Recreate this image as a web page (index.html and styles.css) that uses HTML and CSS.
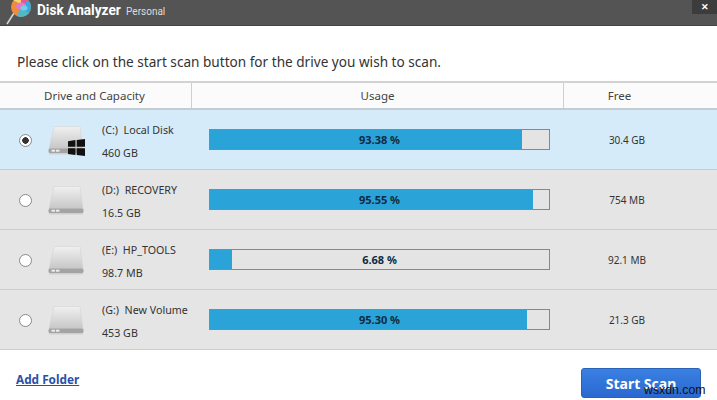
FILE: index.html
```html
<!DOCTYPE html>
<html lang="en">
<head>
    <meta charset="UTF-8">
    <title>Disk Analyzer Personal</title>
    <link rel="stylesheet" href="styles.css">
</head>
<body>
    <svg width="0" height="0" class="defs">
        <defs>
            <linearGradient id="driveTop" x1="0" y1="0" x2="0" y2="1">
                <stop offset="0" stop-color="#f0f0f0"/>
                <stop offset="1" stop-color="#c6c6c6"/>
            </linearGradient>
            <symbol id="drive" viewBox="0 0 36 29">
                <path d="M6 0.500H32L35 23H1Z" fill="url(#driveTop)" stroke="#d0d0d0" stroke-width="0.5"/>
                <rect x="0.500" y="22.500" width="35" height="4.500" rx="1.500" fill="#a3a3a3"/>
                <rect x="1" y="27" width="34" height="1.500" fill="#cfcfcf"/>
                <rect x="3.500" y="23.700" width="3.500" height="2" fill="#ececec"/>
                <rect x="8" y="23.700" width="3.500" height="2" fill="#ececec"/>
            </symbol>
        </defs>
    </svg>

    <header class="titlebar">
        <svg class="logo" width="26" height="25" viewBox="0 0 26 25">
            <path d="M8 13L1 24" stroke="#d8d8d8" stroke-width="1.500" fill="none"/>
            <circle cx="15" cy="7" r="10" fill="#f08a3c"/>
            <path d="M7.500 0.500A10 10 0 0 1 15 -3L17 5Z" fill="#f5d76e"/>
            <path d="M15 -3A10 10 0 0 1 22 0L20 8 15 6Z" fill="#e9558f"/>
            <path d="M22 0A10 10 0 0 1 23 13L14 8Z" fill="#36a9e1"/>
            <path d="M23 13A10 10 0 0 1 11 16L14 8Z" fill="#4fb9c9"/>
            <ellipse cx="15" cy="6" rx="5" ry="3.500" fill="#e07ad0"/>
            <ellipse cx="18" cy="8" rx="3.500" ry="2.500" fill="#6fd3e8"/>
        </svg>
        <span class="app-name">Disk Analyzer</span>
        <span class="app-edition">Personal</span>
        <button class="close">&#10005;</button>
    </header>

    <p class="intro">Please click on the start scan button for the drive you wish to scan.</p>

    <div class="table-head">
        <div class="col-drive">Drive and Capacity</div>
        <div class="col-usage">Usage</div>
        <div class="col-free">Free</div>
    </div>

    <div class="row selected">
        <span class="radio"></span>
        <div class="drive-icon">
            <svg width="36" height="29"><use href="#drive"/></svg>
            <svg class="win" width="17" height="17" viewBox="0 0 16 16">
                <path d="M0 2L7 1V7.300H0ZM8.200 1L16 0V7.300H8.200ZM0 8.600H7V15L0 14ZM8.200 8.600H16V16L8.200 15Z" fill="#111"/>
            </svg>
        </div>
        <div class="drive-info"><span>(C:)&nbsp; Local Disk</span><span>460 GB</span></div>
        <div class="usage"><div class="bar"><div class="fill" style="width: 312px"></div><span>93.38 %</span></div></div>
        <div class="free">30.4 GB</div>
    </div>
    <div class="row">
        <span class="radio"></span>
        <div class="drive-icon"><svg width="36" height="29"><use href="#drive"/></svg></div>
        <div class="drive-info"><span>(D:)&nbsp; RECOVERY</span><span>16.5 GB</span></div>
        <div class="usage"><div class="bar"><div class="fill" style="width: 323px"></div><span>95.55 %</span></div></div>
        <div class="free">754 MB</div>
    </div>
    <div class="row">
        <span class="radio"></span>
        <div class="drive-icon"><svg width="36" height="29"><use href="#drive"/></svg></div>
        <div class="drive-info"><span>(E:)&nbsp; HP_TOOLS</span><span>98.7 MB</span></div>
        <div class="usage"><div class="bar"><div class="fill" style="width: 22px"></div><span>6.68 %</span></div></div>
        <div class="free">92.1 MB</div>
    </div>
    <div class="row">
        <span class="radio"></span>
        <div class="drive-icon"><svg width="36" height="29"><use href="#drive"/></svg></div>
        <div class="drive-info"><span>(G:)&nbsp; New Volume</span><span>453 GB</span></div>
        <div class="usage"><div class="bar"><div class="fill" style="width: 317px"></div><span>95.30 %</span></div></div>
        <div class="free">21.3 GB</div>
    </div>

    <footer class="footer">
        <a class="add-folder" href="#">Add Folder</a>
        <button class="start">Start Scan</button>
    </footer>

    <span class="watermark">wsxdn.com</span>
</body>
</html>
```

FILE: styles.css
```css
*{
    margin: 0;
    padding: 0;
    box-sizing: border-box;
}
html,body{
    height: 400px;
    overflow: hidden;
}
body{
    position: relative;
    background-color: white;
    font-family: "Noto Sans", "Open Sans", sans-serif;
    color: #333;
}
.defs{
    position: absolute;
}
.titlebar{
    height: 26px;
    background-color: #545454;
    border-bottom: 1px solid #444;
    display: flex;
    align-items: flex-start;
    padding-left: 6px;
    color: white;
}
.logo{
    margin-right: 5px;
}
.app-name{
    font-family: "Roboto", sans-serif;
    font-weight: 700;
    font-size: 15px;
    line-height: 21px;
    transform: scaleX(0.91);
    transform-origin: left;
    margin-right: -3px;
}
.app-edition{
    font-family: "Roboto", sans-serif;
    font-size: 10px;
    line-height: 23px;
    color: #ddd;
}
.close{
    margin-left: auto;
    width: 25px;
    height: 14px;
    background-color: #3c3c3c;
    border: none;
    color: white;
    font-size: 9px;
    font-weight: 700;
    line-height: 14px;
}
.intro{
    margin-top: 27px;
    padding-left: 17px;
    font-size: 13.600px;
    line-height: 18px;
    color: #333;
}
.table-head{
    margin-top: 10px;
    height: 29px;
    display: flex;
    background-color: #fbfbfb;
    border-top: 2px solid #d2d2d2;
    border-bottom: 2px solid #c3ccd2;
    font-size: 11.500px;
    color: #444;
    text-align: center;
    line-height: 25px;
}
.col-drive{
    width: 192px;
    border-right: 1px solid #cfcfcf;
    padding-right: 2px;
}
.col-usage{
    width: 372px;
    border-right: 1px solid #cfcfcf;
}
.col-free{
    flex: 1;
    padding-right: 42px;
}
.row{
    height: 60px;
    display: flex;
    align-items: center;
    background-color: #e5e5e5;
    border-bottom: 1px solid #cdcdcd;
    font-size: 10.700px;
}
.row.selected{
    background-color: #d5ebf9;
    border-bottom-color: #c5cdd3;
}
.radio{
    width: 13px;
    height: 13px;
    margin-left: 19px;
    margin-top: 1px;
    border-radius: 50%;
    border: 1px solid #8a8a8a;
    background-color: white;
}
.selected .radio{
    background: radial-gradient(circle, #333 3px, white 3.500px);
}
.drive-icon{
    position: relative;
    width: 36px;
    height: 29px;
    margin-left: 16px;
    margin-top: 1px;
}
.win{
    position: absolute;
    right: -1px;
    bottom: -1px;
}
.drive-info{
    width: 107px;
    margin-left: 18px;
    padding-top: 4px;
    display: flex;
    flex-direction: column;
    gap: 7px;
    line-height: 16px;
}
.usage{
    width: 372px;
}
.bar{
    position: relative;
    width: 341px;
    height: 21px;
    background-color: #e4e4e4;
    border: 1px solid #808a90;
    text-align: center;
    font-size: 11px;
    font-weight: 700;
    line-height: 19px;
    color: #0e2a3f;
}
.fill{
    position: absolute;
    left: 0;
    top: 0;
    bottom: 0;
    background-color: #2aa3d9;
}
.bar span{
    position: relative;
}
.free{
    flex: 1;
    padding-right: 44px;
    text-align: center;
    font-size: 10px;
}
.footer{
    display: flex;
    align-items: center;
    justify-content: space-between;
    padding: 18px 16px 0;
}
.add-folder{
    font-size: 11.800px;
    font-weight: 700;
    color: #2a50a8;
    margin-bottom: 8px;
}
.start{
    width: 120px;
    height: 30px;
    border: 1px solid #2a62b8;
    border-radius: 3px;
    background: linear-gradient(#3a80e2, #2a68d0);
    color: white;
    font-family: inherit;
    font-size: 14px;
    font-weight: 700;
}
.watermark{
    position: absolute;
    left: 644px;
    top: 383px;
    font-family: "Liberation Sans", sans-serif;
    font-size: 12.300px;
    color: #111;
}
```
